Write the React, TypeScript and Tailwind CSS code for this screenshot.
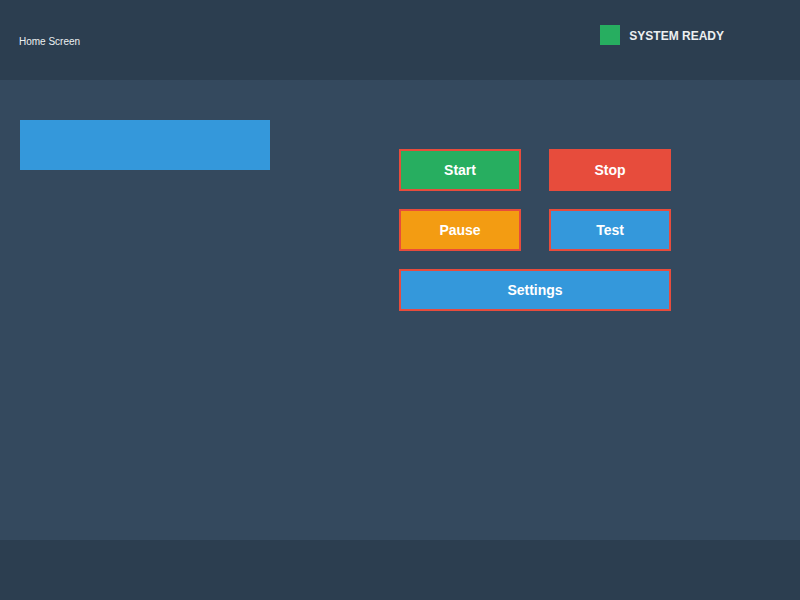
import React from 'react';

const Btn = ({ label, bg, wide }: { label: string; bg: string; wide?: boolean }) => (
  <button
    className={`${bg} ${wide ? 'w-[272px]' : 'w-[122px]'} h-[42px] border-2 border-[#e74c3c] text-white text-[14px] font-bold flex items-center justify-center`}
  >
    {label}
  </button>
);

export default function App() {
  return (
    <div className="w-[800px] h-[600px] flex flex-col font-['Liberation_Sans',Arial,sans-serif]">
      {/* Header */}
      <div className="h-[80px] bg-[#2c3e50] flex items-start justify-between">
        <span className="mt-[36px] ml-[19px] text-[10px] text-[#ecf0f1] leading-[12px]">Home Screen</span>
        <div className="mt-[25px] mr-[76px] flex items-center gap-[9px]">
          <div className="w-[20px] h-[20px] bg-[#27ae60]" />
          <span className="pt-[2px] text-[12px] font-bold text-[#ecf0f1]">SYSTEM READY</span>
        </div>
      </div>

      {/* Main */}
      <div className="h-[460px] bg-[#34495e] flex items-start pt-[40px] pl-[20px]">
        <div className="w-[250px] h-[50px] bg-[#3498db]" />
        <div className="ml-[129px] mt-[29px] flex flex-col gap-[18px]">
          <div className="flex gap-[28px]">
            <Btn label="Start" bg="bg-[#27ae60]" />
            <Btn label="Stop" bg="bg-[#e74c3c]" />
          </div>
          <div className="flex gap-[28px]">
            <Btn label="Pause" bg="bg-[#f39c12]" />
            <Btn label="Test" bg="bg-[#3498db]" />
          </div>
          <Btn label="Settings" bg="bg-[#3498db]" wide />
        </div>
      </div>

      {/* Footer */}
      <div className="h-[60px] bg-[#2c3e50]" />
    </div>
  );
}
